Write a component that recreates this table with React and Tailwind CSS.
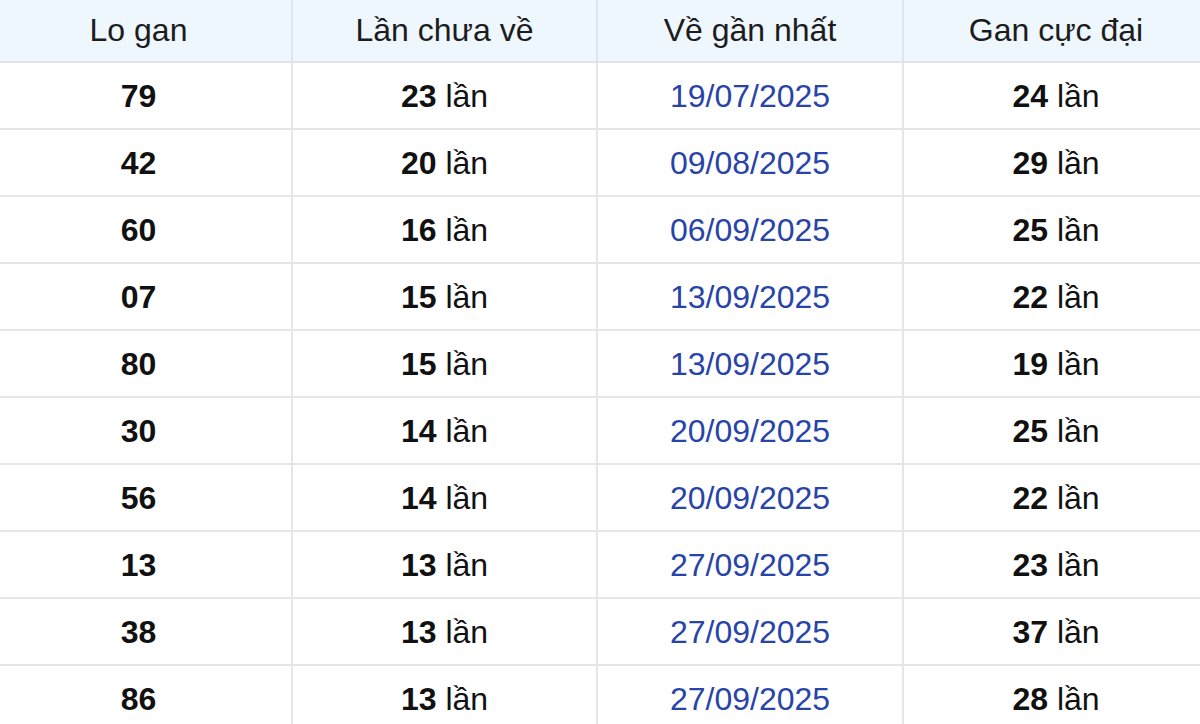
import React from "react";

const rows = [
  ["79", "23", "19/07/2025", "24"],
  ["42", "20", "09/08/2025", "29"],
  ["60", "16", "06/09/2025", "25"],
  ["07", "15", "13/09/2025", "22"],
  ["80", "15", "13/09/2025", "19"],
  ["30", "14", "20/09/2025", "25"],
  ["56", "14", "20/09/2025", "22"],
  ["13", "13", "27/09/2025", "23"],
  ["38", "13", "27/09/2025", "37"],
  ["86", "13", "27/09/2025", "28"],
];

const headers = ["Lo gan", "Lần chưa về", "Về gần nhất", "Gan cực đại"];

const cell = "flex items-center justify-center border-r-2 border-b-2 border-[#e6e6e6]";

const App = () => {
  return (
    <div className="h-[724px] w-[1200px] overflow-hidden bg-white font-['Liberation_Sans',Arial,sans-serif] text-[32px] text-[#111]">
      <div className="-ml-[14px] grid w-[1224px] grid-cols-[307px_305px_306px_306px]">
        {headers.map((h) => (
          <div
            key={h}
            className="flex h-[63px] items-center justify-center border-r-2 border-b-2 border-[#dfe5ec] bg-[#eef6fe] pb-[2px] text-[#1c1c1c]"
          >
            {h}
          </div>
        ))}

        {rows.map(([lo, chua, date, max], i) => (
          <React.Fragment key={i}>
            <div className={`${cell} h-[67px] font-bold`}>{lo}</div>
            <div className={`${cell} h-[67px]`}>
              <span className="font-bold">{chua}</span>&nbsp;lần
            </div>
            <div className={`${cell} h-[67px] text-[#2844a8]`}>{date}</div>
            <div className={`${cell} h-[67px]`}>
              <span className="font-bold">{max}</span>&nbsp;lần
            </div>
          </React.Fragment>
        ))}
      </div>
    </div>
  );
};

export default App;
